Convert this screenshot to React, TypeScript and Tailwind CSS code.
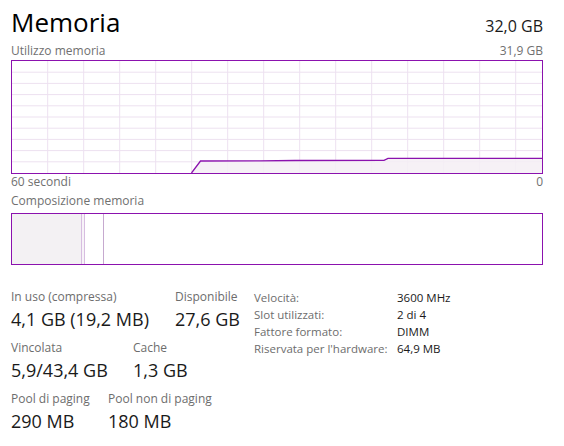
// Memory performance panel (Task Manager style)

const PURPLE = '#8b12ae';

// vertical grid lines, x relative to the plot's inner area
const V_LINES = Array.from({ length: 14 }, (_, i) => 35.7 + i * 36);
const H_LINES = Array.from({ length: 9 }, (_, i) => (i + 1) * 11.2);

// usage line, inner coords (530 x 112)
const USAGE: [number, number][] = [
  [179.5, 112],
  [188.5, 100],
  [248, 99.8],
  [283, 99.5],
  [372, 99.3],
  [376, 97.3],
  [530, 97.3],
];

function UsageChart() {
  const line = USAGE.map(([x, y]) => `${x},${y}`).join(' ');
  const area = `${line} 530,112 179.5,112`;
  return (
    <div className="w-[532px] h-[114px] border border-[#8b12ae] bg-white">
      <svg width="530" height="112" viewBox="0 0 530 112" className="block">
        {H_LINES.map(y => (
          <line key={`h${y}`} x1="0" x2="530" y1={y} y2={y} stroke="#ede1f0" strokeWidth="1" />
        ))}
        {V_LINES.map(x => (
          <line key={`v${x}`} x1={x} x2={x} y1="0" y2="112" stroke="#ede1f0" strokeWidth="1" />
        ))}
        <polygon points={area} fill="#f4eff5" fillOpacity="0.85" />
        <polyline points={line} fill="none" stroke={PURPLE} strokeWidth="1.3" />
      </svg>
    </div>
  );
}

function CompositionBar() {
  return (
    <div className="w-[532px] h-[52px] border border-[#8b12ae] flex bg-white">
      {/* in uso */}
      <div className="w-[70px] h-full bg-[#f3f1f3] border-r border-[#d7bde0]" />
      {/* modificata */}
      <div className="w-[3px] h-full bg-[#f7f3f8] border-r border-[#d7bde0]" />
      {/* standby */}
      <div className="w-[19px] h-full border-r border-[#c6a9cf]" />
      {/* libera */}
      <div className="flex-1" />
    </div>
  );
}

function Stat({ label, value, width }: { label: string; value: string; width: string }) {
  return (
    <div className={width}>
      <div className="text-[12px] leading-4 text-[#6d6d6d] whitespace-nowrap">{label}</div>
      <div className="mt-[2px] text-[18px] leading-[24px] text-[#1a1a1a] whitespace-nowrap">{value}</div>
    </div>
  );
}

const DETAILS = [
  ['Velocità:', '3600 MHz'],
  ['Slot utilizzati:', '2 di 4'],
  ['Fattore formato:', 'DIMM'],
  ["Riservata per l'hardware:", '64,9 MB'],
];

export default function App() {
  return (
    <div
      className="w-[564px] h-[446px] bg-white px-[11px] pt-[4px] overflow-hidden"
      style={{ fontFamily: '"Open Sans", "Noto Sans", sans-serif' }}
    >
      {/* Header */}
      <div className="w-[532px] flex items-baseline justify-between h-[36px]">
        <h1 className="text-[26px] leading-[36px] text-black">Memoria</h1>
        <span className="text-[16px] text-[#1a1a1a]">32,0 GB</span>
      </div>

      <div className="w-[532px] mt-[3px] flex justify-between text-[12px] leading-4 text-[#707070]">
        <span>Utilizzo memoria</span>
        <span>31,9 GB</span>
      </div>

      <div className="mt-px">
        <UsageChart />
      </div>

      <div className="w-[532px] flex justify-between text-[12px] leading-4 text-[#707070]">
        <span>60 secondi</span>
        <span>0</span>
      </div>

      <div className="mt-[3px] text-[12px] leading-4 text-[#707070]">Composizione memoria</div>

      <div className="mt-[4px]">
        <CompositionBar />
      </div>

      {/* Stats */}
      <div className="mt-[24px] flex">
        <div className="w-[243px] flex flex-col gap-[9px]">
          <div className="flex">
            <Stat width="w-[164px]" label="In uso (compressa)" value="4,1 GB (19,2 MB)" />
            <Stat width="w-auto" label="Disponibile" value="27,6 GB" />
          </div>
          <div className="flex">
            <Stat width="w-[122px]" label="Vincolata" value="5,9/43,4 GB" />
            <Stat width="w-auto" label="Cache" value="1,3 GB" />
          </div>
          <div className="flex">
            <Stat width="w-[97px]" label="Pool di paging" value="290 MB" />
            <Stat width="w-auto" label="Pool non di paging" value="180 MB" />
          </div>
        </div>

        <div className="flex flex-col text-[11.5px] leading-[17px]">
          {DETAILS.map(([label, value]) => (
            <div key={label} className="flex">
              <span className="w-[143px] text-[#6d6d6d] whitespace-nowrap">{label}</span>
              <span className="text-[#1a1a1a] whitespace-nowrap">{value}</span>
            </div>
          ))}
        </div>
      </div>
    </div>
  );
}
